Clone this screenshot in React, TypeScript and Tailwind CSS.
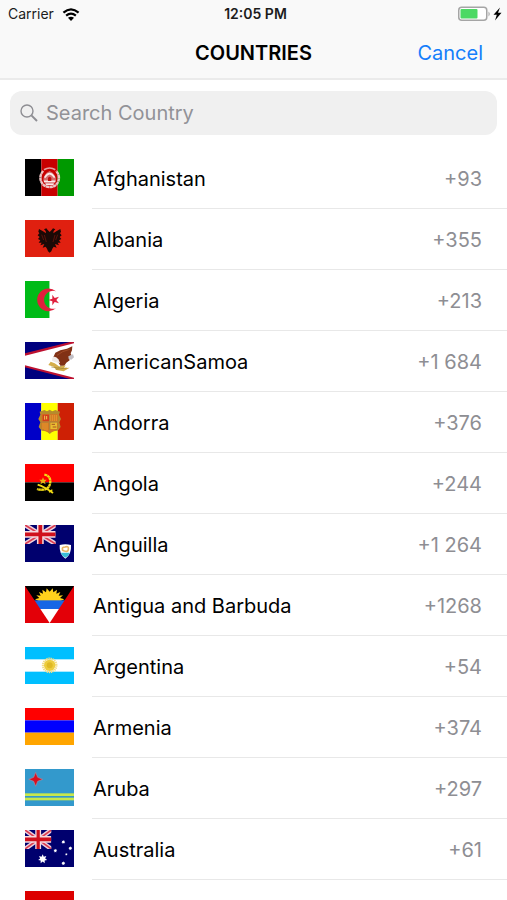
import React, { useState } from 'react';

interface Country {
  name: string;
  dialCode: string;
  flag: React.ReactNode;
}

// Flags are drawn on a 147 x 111 canvas
const UnionJack: React.FC<{ width: number }> = ({ width }) => (
  <svg x="0" y="0" width={width} height="57" viewBox="0 0 90 57" preserveAspectRatio="none">
    <rect width="90" height="57" fill="#00006e" />
    <path d="M0 0L90 57M90 0L0 57" stroke="#eccfdc" strokeWidth="14" />
    <path d="M0 0L90 57M90 0L0 57" stroke="#dc3c50" strokeWidth="5" />
    <path d="M45 0V57M0 28H90" stroke="#f5d9df" strokeWidth="20" />
    <path d="M45 0V57M0 28H90" stroke="#d0101c" strokeWidth="11" />
  </svg>
);

const Star: React.FC<{ cx: number; cy: number; r: number }> = ({ cx, cy, r }) => (
  <g transform={`translate(${cx} ${cy}) scale(${r})`} fill="#fff">
    <path d="M0-1L.24-.5L.78-.62L.54-.12L.97.22L.43.34L.43.9L0 .56L-.43.9L-.43.34L-.97.22L-.54-.12L-.78-.62L-.24-.5Z" />
  </g>
);

const countries: Country[] = [
  {
    name: 'Afghanistan',
    dialCode: '+93',
    flag: (
      <>
        <rect width="49" height="111" fill="#000" />
        <rect x="49" width="49" height="111" fill="#c80000" />
        <rect x="98" width="49" height="111" fill="#009900" />
        <path d="M55 36A28 28 0 1 0 93 36" fill="none" stroke="#ecc4c4" strokeWidth="7" strokeDasharray="10 1" />
        <path d="M57 32Q74 22 91 32" fill="none" stroke="#e2a0a0" strokeWidth="5" />
        <path d="M55 66Q54 46 74 36Q94 46 93 66L86 76H62Z" fill="#d46c6c" />
        <path d="M59 56Q74 32 89 56M57 67H91M62 76H86" fill="none" stroke="#fbe9e9" strokeWidth="5" />
        <path d="M69 66V57Q74 50 79 57V66Z" fill="#c00d0d" />
      </>
    ),
  },
  {
    name: 'Albania',
    dialCode: '+355',
    flag: (
      <>
        <rect width="147" height="111" fill="#e02010" />
        <path
          d="M74 36L68 30L64 25L57 28L62 33L63 40L54 34L42 27L40 35L43 40L38 46L44 51L39 57L46 61L41 68L50 68L46 76L58 72L53 83L62 80L66 86L69 94L74 98L79 94L82 86L86 80L95 83L90 72L102 76L98 68L107 68L102 61L109 57L104 51L110 46L105 40L108 35L106 27L94 34L85 40L86 33L91 28L84 25L80 30Z"
          fill="#1b0906"
        />
        <path d="M58 45L64 66M90 45L84 66M50 44L56 60M98 44L92 60" stroke="#7b160c" strokeWidth="2" />
      </>
    ),
  },
  {
    name: 'Algeria',
    dialCode: '+213',
    flag: (
      <>
        <rect width="74" height="111" fill="#00bb18" />
        <rect x="74" width="73" height="111" fill="#fff" />
        <path d="M93 31A34 34 0 1 0 93 82A27 27 0 1 1 93 31Z" fill="#e01f3c" />
        <path d="M70 57L82 53L82 41L89 51L102 47L94 57L102 67L89 63L82 73L82 61Z" fill="#e01f3c" />
      </>
    ),
  },
  {
    name: 'AmericanSamoa',
    dialCode: '+1 684',
    flag: (
      <>
        <rect width="147" height="111" fill="#00007e" />
        <path d="M0 34L147-3V114L0 76Z" fill="#bd1030" />
        <path d="M0 41L147 4V107L0 70Z" fill="#fff" />
        <path d="M85 46L91 32L106 25L126 20L142 13L141 25L137 34L139 39L132 47L134 55L124 62L118 71L106 71L98 57Z" fill="#813115" />
        <path d="M96 40L113 29L134 22" fill="none" stroke="#a04a26" strokeWidth="3" />
        <path d="M82 47Q92 40 100 52L105 63L91 61L81 56Z" fill="#f0e9e5" />
        <path d="M130 43L144 37L147 46L139 53L131 51Z" fill="#c2bfc5" />
        <path d="M77 59L70 69L86 74L94 84L116 88L134 77L117 78L122 70L104 74L89 64Z" fill="#d5ae4b" />
        <path d="M79 75L99 78L112 71M92 82L125 78" fill="none" stroke="#9b8032" strokeWidth="2" />
      </>
    ),
  },
  {
    name: 'Andorra',
    dialCode: '+376',
    flag: (
      <>
        <rect width="49" height="111" fill="#0000c8" />
        <rect x="49" width="49" height="111" fill="#ffff00" />
        <rect x="98" width="49" height="111" fill="#ce2005" />
        <path d="M44 26L58 21L66 25L74 20L82 25L91 21L105 26L102 35L108 48L103 58L107 72L98 83L84 85L74 93L64 85L50 83L41 72L46 58L40 48L46 35Z" fill="#b68b2d" />
        <path d="M49 33H99V74Q94 84 74 88Q54 84 49 74Z" fill="#d07823" />
        <rect x="53" y="35" width="19" height="20" fill="#d33b1c" />
        <path d="M59 38V50M65 39V49" stroke="#f3cc50" strokeWidth="3" />
        <path d="M76 36V54M82 36V54M88 36V54M94 36V54M54 60V78M60 60V81M66 60V83" stroke="#e9982f" strokeWidth="3" />
        <rect x="76" y="58" width="20" height="20" fill="#e9bd30" />
        <path d="M80 64H90M83 72H94" stroke="#a65323" strokeWidth="3" />
        <path d="M49 57H99M74 34V87" stroke="#aa8540" strokeWidth="3" />
      </>
    ),
  },
  {
    name: 'Angola',
    dialCode: '+244',
    flag: (
      <>
        <rect width="147" height="55" fill="#ff0000" />
        <rect y="55" width="147" height="56" fill="#000" />
        <path d="M58 32Q76 35 76 53Q74 76 54 77Q45 78 36 75" fill="none" stroke="#f2dc15" strokeWidth="7" strokeDasharray="8 1" />
        <path d="M38 62Q58 68 84 87" fill="none" stroke="#f2dc15" strokeWidth="6" />
        <path d="M72 85L82 77" stroke="#f2dc15" strokeWidth="4" />
        <path d="M54 40L57 47L65 47L59 53L62 61L54 56L46 61L49 53L43 47L51 47Z" fill="#e8b414" />
      </>
    ),
  },
  {
    name: 'Anguilla',
    dialCode: '+1 264',
    flag: (
      <>
        <rect width="147" height="111" fill="#00006e" />
        <UnionJack width={92} />
        <path d="M104 60Q121 56 138 60Q140 88 121 101Q102 88 104 60Z" fill="#fff" />
        <path d="M107 83H135Q131 93 121 98Q111 93 107 83Z" fill="#39bcd9" />
        <path d="M113 76Q109 66 120 66Q132 62 130 73Q129 82 118 78Z" fill="none" stroke="#e9b565" strokeWidth="5" />
      </>
    ),
  },
  {
    name: 'Antigua and Barbuda',
    dialCode: '+1268',
    flag: (
      <>
        <rect width="147" height="111" fill="#000" />
        <path
          d="M41 45L30 40L43 36L34 28L47 29L42 18L54 23L52 11L63 19L65 7L74 17L83 7L85 19L96 11L94 23L106 18L101 29L114 28L105 36L118 40L107 45Z"
          fill="#ffd21c"
        />
        <rect y="43" width="147" height="26" fill="#1766e5" />
        <rect y="69" width="147" height="42" fill="#fff" />
        <path d="M0 0V111H74Z" fill="#e30008" />
        <path d="M147 0V111H74Z" fill="#e30008" />
      </>
    ),
  },
  {
    name: 'Argentina',
    dialCode: '+54',
    flag: (
      <>
        <rect width="147" height="111" fill="#00bfff" />
        <rect y="37" width="147" height="37" fill="#fff" />
        <circle cx="74" cy="55" r="20" fill="none" stroke="#f3dc85" strokeWidth="7" strokeDasharray="4 2" />
        <circle cx="74" cy="55" r="17" fill="#edcd3f" />
        <circle cx="74" cy="55" r="9" fill="#dfb924" />
      </>
    ),
  },
  {
    name: 'Armenia',
    dialCode: '+374',
    flag: (
      <>
        <rect width="147" height="37" fill="#ff0000" />
        <rect y="37" width="147" height="37" fill="#0000ff" />
        <rect y="74" width="147" height="37" fill="#ffa500" />
      </>
    ),
  },
  {
    name: 'Aruba',
    dialCode: '+297',
    flag: (
      <>
        <rect width="147" height="111" fill="#3399cc" />
        <rect y="73" width="147" height="8" fill="#c8e84a" />
        <rect y="86" width="147" height="8" fill="#c8e84a" />
        <path d="M32 10L38 25L53 31L38 37L32 52L26 37L11 31L26 25Z" fill="#d80f20" stroke="#a98a9f" strokeWidth="2" />
      </>
    ),
  },
  {
    name: 'Australia',
    dialCode: '+61',
    flag: (
      <>
        <rect width="147" height="111" fill="#00006e" />
        <UnionJack width={79} />
        <Star cx={53} cy={87} r={14} />
        <Star cx={115} cy={36} r={6} />
        <Star cx={91} cy={62} r={6} />
        <Star cx={136} cy={55} r={6} />
        <Star cx={124} cy={73} r={4} />
        <Star cx={115} cy={100} r={6} />
      </>
    ),
  },
  {
    name: 'Austria',
    dialCode: '+43',
    flag: (
      <>
        <rect width="147" height="111" fill="#dc0000" />
        <rect y="37" width="147" height="37" fill="#fff" />
      </>
    ),
  },
];

const StatusBar: React.FC = () => (
  <div className="grid grid-cols-3 items-center h-7 pl-2 pr-1 text-sm text-[#1c1c1c]">
    <div className="flex items-center gap-2">
      <span>Carrier</span>
      <svg className="w-[18px] h-[13px]" viewBox="0 0 16 12" fill="none" stroke="#000" strokeWidth="2">
        <path d="M1 4.3Q8-1.9 15 4.3" />
        <path d="M3.5 7Q8 3.2 12.5 7" />
        <path d="M8 12L5.2 9.1Q8 7 10.8 9.1Z" fill="#000" stroke="none" />
      </svg>
    </div>
    <span className="text-center font-semibold whitespace-nowrap">12:05 PM</span>
    <svg className="w-[45px] h-4 justify-self-end" viewBox="0 0 45 16">
      <rect x="0.75" y="1.25" width="28" height="13" rx="3" fill="#fff" stroke="#a5a5a5" strokeWidth="1.5" />
      <rect x="2.5" y="3" width="17" height="9.5" rx="1" fill="#4cd964" />
      <path d="M30.5 5.5Q33 8 30.5 10.5Z" fill="#a5a5a5" />
      <path d="M42 1.5L35.5 8.7H38.8L37 14.5L43.5 6.8H40Z" fill="#000" />
    </svg>
  </div>
);

const App: React.FC = () => {
  const [query, setQuery] = useState('');

  const visible = countries.filter((country) =>
    country.name.toLowerCase().includes(query.trim().toLowerCase())
  );

  return (
    <div className="flex flex-col h-screen bg-white font-['Inter',sans-serif] text-black">
      {/* Header */}
      <header className="shrink-0 bg-[#f9f9f9] border-b-2 border-[#ebebeb]">
        <StatusBar />
        <div className="grid grid-cols-[1fr_auto_1fr] items-center h-[50px] px-6">
          <h1 className="col-start-2 text-xl font-semibold">COUNTRIES</h1>
          <button type="button" onClick={() => setQuery('')} className="justify-self-end text-xl text-[#147efb]">
            Cancel
          </button>
        </div>
      </header>

      {/* Search */}
      <div className="shrink-0 px-[10px] pt-[11px] pb-[13px]">
        <label className="flex items-center gap-2 h-11 px-[10px] rounded-xl bg-[#f0f0f0]">
          <svg className="w-[18px] h-[18px] shrink-0" viewBox="0 0 18 18" fill="none" stroke="#8e8e93">
            <circle cx="7" cy="7" r="6" strokeWidth="1.4" />
            <path d="M11.4 11.4L17 17" strokeWidth="2" />
          </svg>
          <input
            type="text"
            aria-label="Search Country"
            placeholder="Search Country"
            value={query}
            onChange={(e) => setQuery(e.target.value)}
            className="w-full bg-transparent text-xl outline-none placeholder:text-[#929297]"
          />
        </label>
      </div>

      {/* Countries */}
      <ul className="flex-1 min-h-0 overflow-y-auto [scrollbar-width:none]">
        {visible.map((country) => (
          <li key={country.name} className="flex items-center h-[61px] pl-[25px]">
            <svg className="w-[49px] h-[37px] mb-0.5 shrink-0" viewBox="0 0 147 111" aria-hidden="true">
              {country.flag}
            </svg>
            <div className="flex flex-1 items-center justify-between h-full ml-[18px] pl-px pr-[25px] pt-0.5 border-b border-[#e8e8e8] text-xl leading-none">
              <span>{country.name}</span>
              <span className="text-[#8e8e93]">{country.dialCode}</span>
            </div>
          </li>
        ))}
      </ul>
    </div>
  );
};

export default App;
